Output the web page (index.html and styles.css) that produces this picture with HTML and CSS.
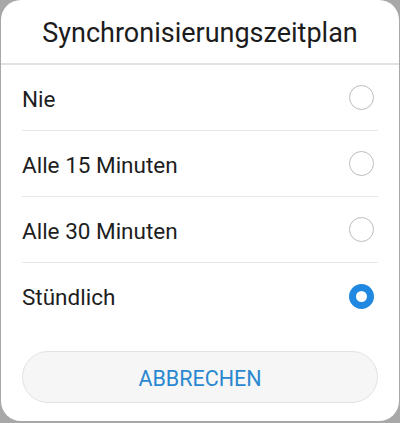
FILE: index.html
```html
<!DOCTYPE html>
<html lang="de">
<head>
<meta charset="utf-8">
<link rel="stylesheet" href="styles.css">
</head>
<body>
<div class="dialog">
  <div class="title">Synchronisierungszeitplan</div>
  <div class="list">
    <div class="row"><span class="label">Nie</span><span class="radio"></span></div>
    <div class="row"><span class="label">Alle 15 Minuten</span><span class="radio"></span></div>
    <div class="row"><span class="label">Alle 30 Minuten</span><span class="radio"></span></div>
    <div class="row last"><span class="label">Stündlich</span><span class="radio checked"></span></div>
  </div>
  <div class="actions">
    <button class="cancel">ABBRECHEN</button>
  </div>
</div>
</body>
</html>
```

FILE: styles.css
```css
html, body {
  margin: 0;
  padding: 0;
}
body {
  background: #a8a8a8;
  width: 400px;
  height: 423px;
  overflow: hidden;
  font-family: Roboto, "Noto Sans", "Liberation Sans", sans-serif;
}
.dialog {
  box-sizing: border-box;
  margin: 0 1px 0 1px;
  height: 421px;
  background: #fff;
  border-radius: 20px;
  display: flex;
  flex-direction: column;
}
.title {
  display: flex;
  align-items: center;
  justify-content: center;
  font-size: 27px;
  color: #1c1c1c;
  border-bottom: 2px solid #e2e2e2;
  padding-top: 3px;
  box-sizing: border-box;
  height: 65px;
}
.list {
  margin: 0 21px;
}
.row {
  height: 66px;
  display: flex;
  align-items: center;
  justify-content: space-between;
  border-bottom: 1px solid #e8e8e8;
  box-sizing: border-box;
}
.row.last {
  border-bottom: none;
}
.label {
  font-size: 22.5px;
  color: #1e1e1e;
  margin-left: 0;
  padding-top: 2px;
}
.radio {
  box-sizing: border-box;
  width: 25px;
  height: 25px;
  border-radius: 50%;
  border: 1.5px solid #bcbcbc;
  margin-right: 4px;
}
.radio.checked {
  border: 7px solid #2088e0;
}
.actions {
  padding: 22px 21px 0;
}
.cancel {
  width: 100%;
  height: 52px;
  border-radius: 26px;
  background: #f6f6f6;
  border: 1px solid #e2e2e2;
  color: #2a88d0;
  font-family: Roboto, "Noto Sans", "Liberation Sans", sans-serif;
  font-size: 21.5px;
  padding: 0;
  padding-top: 2px;
}
```
